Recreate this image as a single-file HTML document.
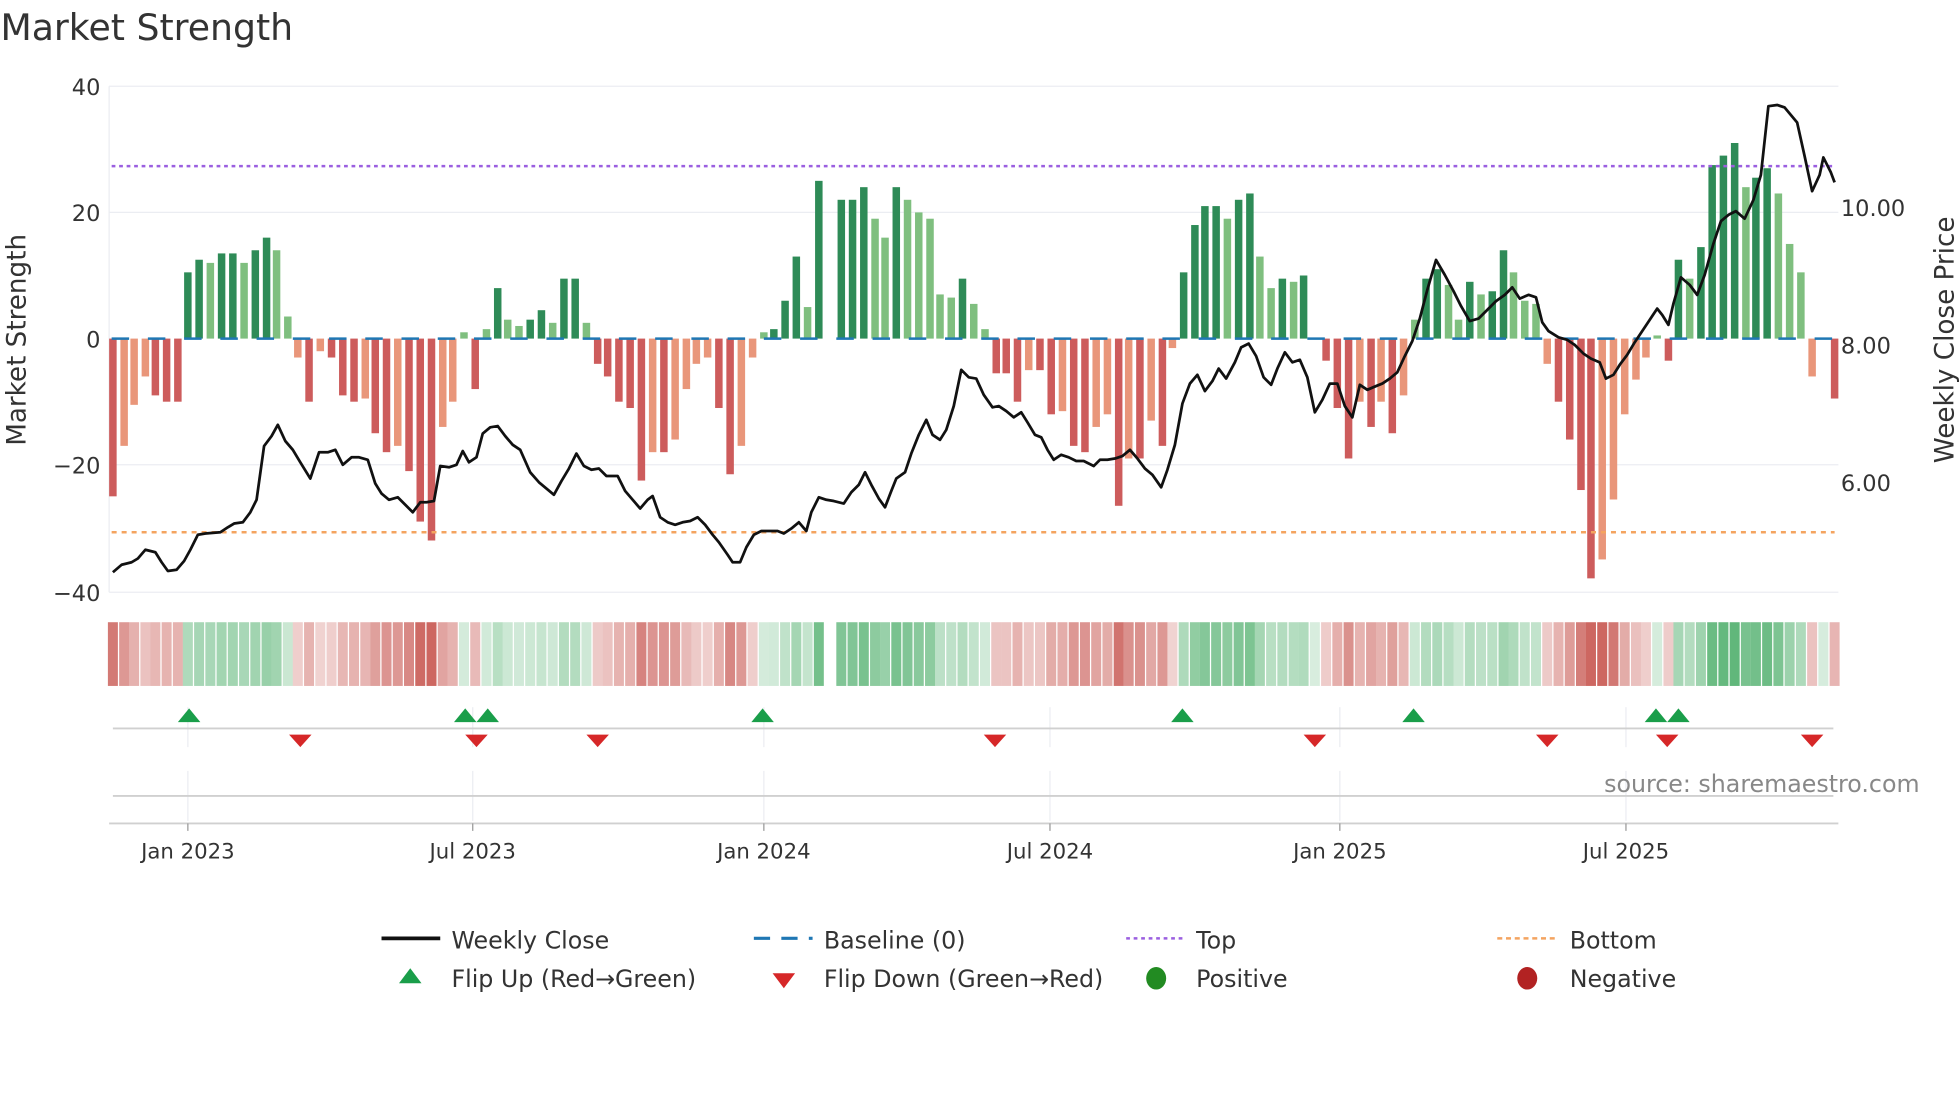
<!DOCTYPE html>
<html><head><meta charset="utf-8"><style>
html,body{margin:0;padding:0;background:#fff;width:1960px;height:1102px;overflow:hidden}
svg{display:block}
text{font-family:"DejaVu Sans","Liberation Sans",sans-serif}
</style></head><body>
<svg id="s" width="1960" height="1102" viewBox="0 0 1568 882" xmlns="http://www.w3.org/2000/svg">
<text x="0" y="32" font-size="29" fill="#333">Market Strength</text>
<g stroke="#ebedf2" stroke-width="1">
<line x1="87" y1="69" x2="1471" y2="69"/><line x1="87" y1="170" x2="1471" y2="170"/>
<line x1="87" y1="372" x2="1471" y2="372"/><line x1="87" y1="474" x2="1471" y2="474"/>
<line x1="87" y1="69" x2="87" y2="474"/>
</g>
<g font-size="18" fill="#333" text-anchor="end">
<text x="80" y="76">40</text><text x="80" y="177">20</text><text x="80" y="278">0</text>
<text x="80" y="379">−20</text><text x="80" y="481">−40</text></g>
<g font-size="18" fill="#333">
<text x="1473" y="173">10.00</text><text x="1473" y="283">8.00</text><text x="1473" y="393">6.00</text></g>
<text transform="translate(20,272) rotate(-90)" font-size="21" fill="#333" text-anchor="middle">Market Strength</text>
<text transform="translate(1563,272) rotate(-90)" font-size="21" fill="#333" text-anchor="middle">Weekly Close Price</text>
<g id="bars"></g>
<line x1="89" y1="271" x2="1468" y2="271" stroke="#1f77b4" stroke-width="2" stroke-dasharray="14,15"/>
<line x1="89" y1="133" x2="1468" y2="133" stroke="#9b5fe0" stroke-width="2" stroke-dasharray="3,3"/>
<line x1="89" y1="426" x2="1468" y2="426" stroke="#f4a460" stroke-width="2" stroke-dasharray="4,4"/>
<polyline id="price" fill="none" stroke="#111" stroke-width="2.2" stroke-linejoin="round"/>
<g id="heat"></g>
<g stroke="#ebedf2"><line x1="150" y1="566" x2="150" y2="598"/><line x1="378" y1="566" x2="378" y2="598"/><line x1="611" y1="566" x2="611" y2="598"/><line x1="840" y1="566" x2="840" y2="598"/><line x1="1072" y1="566" x2="1072" y2="598"/><line x1="1301" y1="566" x2="1301" y2="598"/>
<line x1="150" y1="617" x2="150" y2="657"/><line x1="378" y1="617" x2="378" y2="657"/><line x1="611" y1="617" x2="611" y2="657"/><line x1="840" y1="617" x2="840" y2="657"/><line x1="1072" y1="617" x2="1072" y2="657"/><line x1="1301" y1="617" x2="1301" y2="657"/></g>
<line x1="90" y1="583" x2="1467" y2="583" stroke="#d0d0d0" stroke-width="1.5"/>
<line x1="90" y1="637" x2="1467" y2="637" stroke="#d0d0d0" stroke-width="1.5"/>
<line x1="87" y1="659" x2="1471" y2="659" stroke="#d0d0d0" stroke-width="1.5"/>
<g id="flips"></g>
<text x="1536" y="634" font-size="19" fill="#888" text-anchor="end">source: sharemaestro.com</text>
<g stroke="#999"><line x1="150" y1="659" x2="150" y2="665"/><line x1="378" y1="659" x2="378" y2="665"/><line x1="611" y1="659" x2="611" y2="665"/><line x1="840" y1="659" x2="840" y2="665"/><line x1="1072" y1="659" x2="1072" y2="665"/><line x1="1301" y1="659" x2="1301" y2="665"/></g>
<g font-size="17" fill="#333" text-anchor="middle">
<text x="150" y="687">Jan 2023</text><text x="378" y="687">Jul 2023</text><text x="611" y="687">Jan 2024</text>
<text x="840" y="687">Jul 2024</text><text x="1072" y="687">Jan 2025</text><text x="1301" y="687">Jul 2025</text></g>
<g font-size="19" fill="#333">
<line x1="305" y1="751" x2="352" y2="751" stroke="#111" stroke-width="3"/><text x="361" y="759">Weekly Close</text>
<line x1="603" y1="751" x2="650" y2="751" stroke="#1f77b4" stroke-width="2.5" stroke-dasharray="13,9"/><text x="659" y="759">Baseline (0)</text>
<line x1="901" y1="751" x2="946" y2="751" stroke="#9b5fe0" stroke-width="2" stroke-dasharray="3,3"/><text x="957" y="759">Top</text>
<line x1="1198" y1="751" x2="1244" y2="751" stroke="#f4a460" stroke-width="2" stroke-dasharray="4,3"/><text x="1256" y="759">Bottom</text>
<polygon points="328,775 319,787 337,787" fill="#1a9e4a"/><text x="361" y="790">Flip Up (Red→Green)</text>
<polygon points="618,779 636,779 627,791" fill="#d62728"/><text x="659" y="790">Flip Down (Green→Red)</text>
<ellipse cx="925" cy="783" rx="8" ry="9" fill="#228b22"/><text x="957" y="790">Positive</text>
<ellipse cx="1222" cy="783" rx="8" ry="9" fill="#b22222"/><text x="1256" y="790">Negative</text>
</g>
</svg>
<script>
var V={90:-25,99:-17,107:-10.5,116:-6,124:-9,133:-10,142:-10,150:10.5,159:12.5,168:12,177:13.5,186:13.5,195:12,204:14,213:16,221:14,230:3.5,238:-3,247:-10,256:-2,265:-3,274:-9,283:-10,292:-9.5,300:-15,309:-18,318:-17,327:-21,336:-29,345:-32,354:-14,362:-10,371:1,380:-8,389:1.5,398:8,406:3,415:2,424:3,433:4.5,442:2.5,451:9.5,460:9.5,469:2.5,478:-4,486:-6,495:-10,504:-11,513:-22.5,522:-18,531:-18,540:-16,549:-8,557:-4,566:-3,575:-11,584:-21.5,593:-17,602:-3,611:1,619:1.5,628:6,637:13,646:5,655:25,664:0,673:22,682:22,691:24,700:19,708:16,717:24,726:22,735:20,744:19,752:7,761:6.5,770:9.5,779:5.5,788:1.5,797:-5.5,805:-5.5,814:-10,823:-5,832:-5,841:-12,850:-11.5,859:-17,868:-18,877:-14,886:-12,895:-26.5,903:-19,912:-19,921:-13,930:-17,938:-1.5,947:10.5,956:18,964:21,973:21,982:19,991:22,1000:23,1008:13,1017:8,1026:9.5,1035:9,1043:10,1052:0,1061:-3.5,1070:-11,1079:-19,1088:-10,1097:-14,1105:-10,1114:-15,1123:-9,1132:3,1141:9.5,1150:11,1159:8.5,1167:3,1176:9,1185:7,1194:7.5,1203:14,1211:10.5,1220:6,1229:5.5,1238:-4,1247:-10,1256:-16,1265:-24,1273:-38,1282:-35,1291:-25.5,1300:-12,1309:-6.5,1317:-3,1326:0.5,1335:-3.5,1343:12.5,1352:9.5,1361:14.5,1370:27.5,1379:29,1388:31,1397:24,1405:25.5,1414:27,1423:23,1432:15,1441:10.5,1450:-6,1459:0.4,1468:-9.5};
var ns="http://www.w3.org/2000/svg",b=document.getElementById('bars'),h=document.getElementById('heat');
var xs=Object.keys(V).map(Number).sort(function(a,c){return a-c}),prev=0;
function R(g,x,y,w,hh,f,o){var r=document.createElementNS(ns,'rect');r.setAttribute('x',x);r.setAttribute('y',y);r.setAttribute('width',w);r.setAttribute('height',hh);r.setAttribute('fill',f);if(o!=null)r.setAttribute('fill-opacity',o);g.appendChild(r);}
xs.forEach(function(x){var v=V[x];var y0=271,y1=271-v*5.05;var inc=Math.abs(v)>=Math.abs(prev);var f;
if(v>=0)f=inc?'#2e8b57':'#7fbf7f';else f=inc?'#cd5c5c':'#e9967a';
if(Math.abs(v)>0.2&&x!=1459)R(b,x-3,Math.min(y0,y1),6,Math.abs(y1-y0),f);
if(x!=664){var a=Math.min(1,0.25+Math.abs(v)/40);R(h,x-4,498,8,51,v>=0?'#3aa55a':'#c0413a',a*0.8);}prev=v;});
var P=[90,458,97,452,105,450,110,447,116,440,124,442,129,450,134,457,141,456,147,449,152,440,158,428,164,427,176,426,182,422,187,419,194,418,200,410,205,400,211,357,217,349,222,340,228,353,234,360,240,370,248,383,255,362,262,362,268,360,274,372,281,366,287,366,294,368,300,387,305,395,311,400,318,398,324,404,330,410,336,402,341,402,347,401,352,373,359,374,365,372,370,361,375,370,381,366,386,347,392,342,398,341,404,349,410,356,416,360,424,378,431,386,437,391,443,396,449,385,455,375,461,363,467,373,473,376,479,375,485,381,494,381,500,393,506,400,512,407,518,400,522,397,528,414,534,418,540,420,546,418,552,417,558,414,564,420,570,428,575,434,582,444,586,450,592,450,597,438,603,428,609,425,622,425,627,427,633,423,639,418,645,425,649,410,655,398,661,400,667,401,675,403,681,394,687,388,692,378,697,388,703,399,708,406,713,393,717,383,724,378,729,363,735,348,741,336,746,348,752,352,757,344,763,325,769,296,775,302,781,303,787,316,794,326,799,325,805,329,811,334,817,330,822,338,828,348,833,350,838,360,843,368,849,364,855,366,861,369,867,369,875,373,880,368,886,368,892,367,898,365,904,360,910,367,916,375,922,380,929,390,934,376,940,356,946,323,952,307,958,300,964,313,970,305,975,295,981,303,988,290,993,278,999,275,1005,285,1011,302,1017,308,1022,295,1028,282,1034,290,1040,288,1046,302,1052,330,1058,320,1064,307,1070,307,1076,325,1082,334,1088,308,1094,312,1101,309,1106,307,1112,303,1118,298,1124,285,1130,273,1136,255,1142,232,1149,208,1156,220,1163,233,1169,245,1176,257,1183,255,1190,248,1197,241,1204,236,1210,230,1216,239,1223,236,1229,238,1234,258,1239,265,1247,270,1254,272,1260,276,1267,283,1273,287,1280,290,1285,303,1291,300,1296,292,1302,284,1308,274,1314,265,1320,256,1326,247,1330,252,1335,260,1339,243,1345,222,1352,228,1358,236,1364,220,1371,195,1377,177,1383,172,1389,169,1396,175,1403,160,1409,140,1415,85,1422,84,1428,86,1433,92,1438,98,1444,125,1450,153,1456,140,1459,126,1465,138,1468,146];
var s=[];for(var i=0;i<P.length;i+=2)s.push(P[i]+','+P[i+1]);document.getElementById('price').setAttribute('points',s.join(' '));
var fl=document.getElementById('flips');
[151,372,390,610,946,1131,1325,1343].forEach(function(x){var p=document.createElementNS(ns,'polygon');p.setAttribute('points',(x)+',567 '+(x-9)+',578 '+(x+9)+',578');p.setAttribute('fill','#1a9e4a');fl.appendChild(p);});
[240,381,478,796,1052,1238,1334,1450].forEach(function(x){var p=document.createElementNS(ns,'polygon');p.setAttribute('points',(x-9)+',588 '+(x+9)+',588 '+x+',598');p.setAttribute('fill','#d62728');fl.appendChild(p);});
</script>
</body></html>
